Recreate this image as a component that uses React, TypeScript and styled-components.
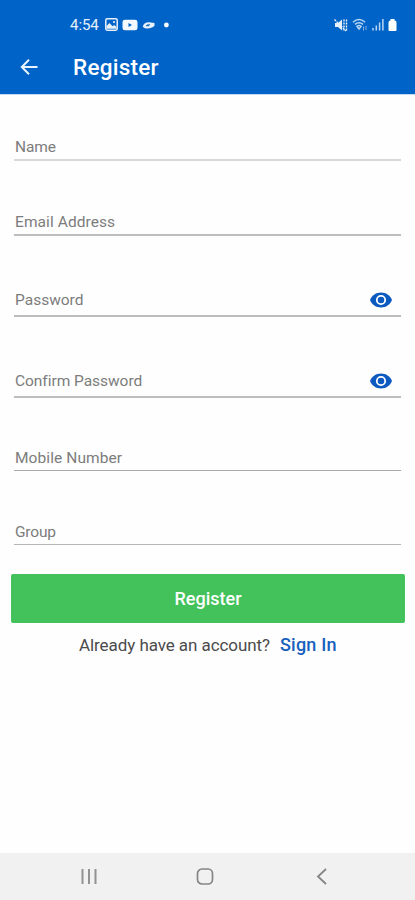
import React from "react";
import styled, { createGlobalStyle } from "styled-components";

const Global = createGlobalStyle`
  * { box-sizing: border-box; }
  body { margin: 0; background: #fff; font-family: Roboto, "Liberation Sans", sans-serif; }
`;

const Screen = styled.div`
  width: 415px;
  height: 900px;
  display: flex;
  flex-direction: column;
  background: #fefefe;
  overflow: hidden;
`;

const Header = styled.header`
  height: 95px;
  flex: none;
  background: #0063c7;
  color: #fff;
  border-bottom: 1px solid #c3daf2;
`;

const StatusBar = styled.div`
  height: 48px;
  padding: 1px 18px 0 70px;
  display: flex;
  align-items: center;
  justify-content: space-between;
`;

const StatusGroup = styled.div<{ $gap: number }>`
  display: flex;
  align-items: center;
  gap: ${(p) => p.$gap}px;
  color: #e6f1fc;
`;

const Clock = styled.span`
  font-size: 15px;
  line-height: 18px;
  width: 30px;
  margin-right: 1px;
  letter-spacing: -0.05px;
`;

const AppBar = styled.div`
  height: 38px;
  display: flex;
  align-items: center;
  padding-left: 20px;
`;

const BackButton = styled.button`
  border: 0;
  padding: 0;
  background: none;
  display: flex;
  width: 53px;
  color: #e9f3fd;
`;

const Title = styled.h1`
  margin: 0;
  font-size: 22.5px;
  line-height: 28px;
  font-weight: 500;
  letter-spacing: 0.25px;
`;

const Form = styled.form`
  display: flex;
  flex-direction: column;
  padding: 0 14px;
`;

const Field = styled.div<{ $height: number; $drop: number; $line: string; $thick?: number }>`
  height: ${(p) => p.$height}px;
  padding: 0 9px ${(p) => p.$drop}px 1px;
  display: flex;
  align-items: flex-end;
  justify-content: space-between;
  border-bottom: ${(p) => p.$thick ?? 1}px solid ${(p) => p.$line};
`;

const Label = styled.label<{ $spacing: number }>`
  font-size: 15.5px;
  line-height: 18px;
  color: #7c7c7c;
  letter-spacing: ${(p) => p.$spacing}px;
`;

const EyeIcon = styled.svg`
  display: block;
  width: 22px;
  height: 18px;
`;

const Submit = styled.button`
  margin: 29px -4px 0 -3px;
  height: 49px;
  width: 394px;
  border: 0;
  border-radius: 2px;
  padding: 1px 0 0;
  background: #43c25b;
  color: #fff;
  font: 500 18px/22px Roboto, sans-serif;
  letter-spacing: 0;
`;

const Prompt = styled.p`
  margin: 11px 0 0 65px;
  display: flex;
  font-size: 17px;
  line-height: 22px;
  color: #4b4b4b;
  letter-spacing: -0.07px;
  white-space: nowrap;
`;

const Question = styled.span`
  width: 201px;
`;

const SignIn = styled.span`
  font-size: 18px;
  font-weight: 500;
  letter-spacing: 0.2px;
  color: #1760bd;
`;

const NavBar = styled.nav`
  margin-top: auto;
  height: 47px;
  flex: none;
  display: flex;
  align-items: center;
  justify-content: space-between;
  padding: 0 85px 0 77px;
  background: #f1f1f1;
`;

const HomeIcon = styled.svg`
  margin-right: 5px;
`;

const Eye = () => (
  <EyeIcon viewBox="0 0 22 18">
    <path d="M0 9C2 4.2 6.1 1.5 11 1.5S20 4.2 22 9c-2 4.8-6.1 7.5-11 7.5S2 13.8 0 9z" fill="#0c5abf" />
    <circle cx="11" cy="9" r="4.2" fill="none" stroke="#fff" strokeWidth="1.8" />
  </EyeIcon>
);

const fields = [
  { label: "Name", height: 66, drop: 3, spacing: -0.1, line: "#d8d8d8", thick: 2 },
  { label: "Email Address", height: 75, drop: 3, spacing: 0.08, line: "#bdbdbd", thick: 2 },
  { label: "Password", height: 81, drop: 6, spacing: 0, line: "#bdbdbd", thick: 2, eye: true },
  { label: "Confirm Password", height: 81, drop: 6, spacing: -0.04, line: "#bdbdbd", thick: 2, eye: true },
  { label: "Mobile Number", height: 73, drop: 3, spacing: 0.08, line: "#a8a8a8" },
  { label: "Group", height: 74, drop: 3, spacing: -0.2, line: "#b5b5b5" },
];

export default function App() {
  return (
    <Screen>
      <Global />
      <Header>
        <StatusBar>
          <StatusGroup $gap={4}>
            <Clock>4:54</Clock>
            <svg width="13" height="13" viewBox="0 0 13 13">
              <rect x=".8" y=".8" width="11.4" height="11.4" rx="1.4" fill="none" stroke="currentColor" strokeWidth="1.5" />
              <path d="M1.5 10.8V8l3-3 3 3.2L9.2 7l2.3 2v1.8z" fill="currentColor" />
              <circle cx="9" cy="4" r="1.1" fill="currentColor" />
            </svg>
            <svg width="16" height="12" viewBox="0 0 16 12">
              <path fillRule="evenodd" d="M3 .7h10Q15.5.7 15.5 3v6q0 2.3-2.5 2.3H3Q.5 11.300.5 9V3Q.5.7 3 .7zM6.500 4v4L10 6z" fill="#f3f9ff" />
            </svg>
            <svg width="13" height="10" viewBox="0 0 13 10">
              <path d="M1 6C1.600 3.400 4 2 7.200 2.200L12.500 3v2.800C10 8.300 5.600 9.300 2.500 8 1.500 7.500.5 7 1 6z" fill="currentColor" />
              <path d="M4 6c.6-1.300 2.200-1.800 4-1.400L6.500 6z" fill="#1767bc" stroke="#1767bc" strokeWidth=".4" />
            </svg>
            <svg width="12" height="6" viewBox="0 0 12 6">
              <circle cx="7.400" cy="3" r="2.400" fill="#fff" />
            </svg>
          </StatusGroup>
          <StatusGroup $gap={4}>
            <svg width="14" height="14" viewBox="0 0 14 14">
              <path d="M1 5h3l4-3.500v11L4 9H1z" fill="currentColor" />
              <path d="M.5 1.500L12 13M10 1.500v11M12.500 1.500v11" stroke="currentColor" strokeWidth="1.400" strokeDasharray="2 1" fill="none" />
            </svg>
            <svg width="16" height="13" viewBox="0 0 16 13">
              <path d="M1 4.200Q7 -1.200 13 4.200M3 6.400Q7 3 11 6.400M5 8.400Q7 6.800 9 8.400L7 11z" stroke="#b8d7f5" strokeWidth="1.500" fill="none" />
              <path d="M11.500 8.500v4M14 8v4" stroke="#7db2e6" strokeWidth="1" />
            </svg>
            <svg width="12" height="13" viewBox="0 0 12 13">
              <path d="M1 10v2.500M4.300 7.500v5M7.600 4.500v8M10.900 1v11.500" stroke="#b8d7f5" strokeWidth="1.500" />
            </svg>
            <svg width="9" height="14" viewBox="0 0 9 14">
              <path d="M2.500 1h4v1.500H7q1.500.5 1.500 2V12q0 1-1 1h-6q-1 0-1-1V4.500q0-1.500 1.500-2h.5z" fill="#fff" />
            </svg>
          </StatusGroup>
        </StatusBar>
        <AppBar>
          <BackButton aria-label="Back">
            <svg width="19" height="20" viewBox="0 0 19 20">
              <path d="M17.500 10H2.500M9 2.800L1.800 10 9 17.200" fill="none" stroke="currentColor" strokeWidth="2" />
            </svg>
          </BackButton>
          <Title>Register</Title>
        </AppBar>
      </Header>
      <Form>
        {fields.map((f) => (
          <Field key={f.label} $height={f.height} $drop={f.drop} $line={f.line} $thick={f.thick}>
            <Label $spacing={f.spacing}>{f.label}</Label>
            {f.eye && <Eye />}
          </Field>
        ))}
        <Submit type="button">Register</Submit>
        <Prompt>
          <Question>Already have an account?</Question>
          <SignIn>Sign In</SignIn>
        </Prompt>
      </Form>
      <NavBar>
        <svg width="24" height="20" viewBox="0 0 24 20">
          <path d="M5.500 2v15M12 2v15M18.500 2v15" stroke="#929292" strokeWidth="2" />
        </svg>
        <HomeIcon width="20" height="20" viewBox="0 0 20 20">
          <rect x="2.500" y="2" width="15" height="15" rx="4.500" fill="none" stroke="#858585" strokeWidth="1.700" />
        </HomeIcon>
        <svg width="16" height="20" viewBox="0 0 16 20">
          <path d="M12 2L4 9.500l8 7.500" fill="none" stroke="#858585" strokeWidth="1.800" />
        </svg>
      </NavBar>
    </Screen>
  );
}
